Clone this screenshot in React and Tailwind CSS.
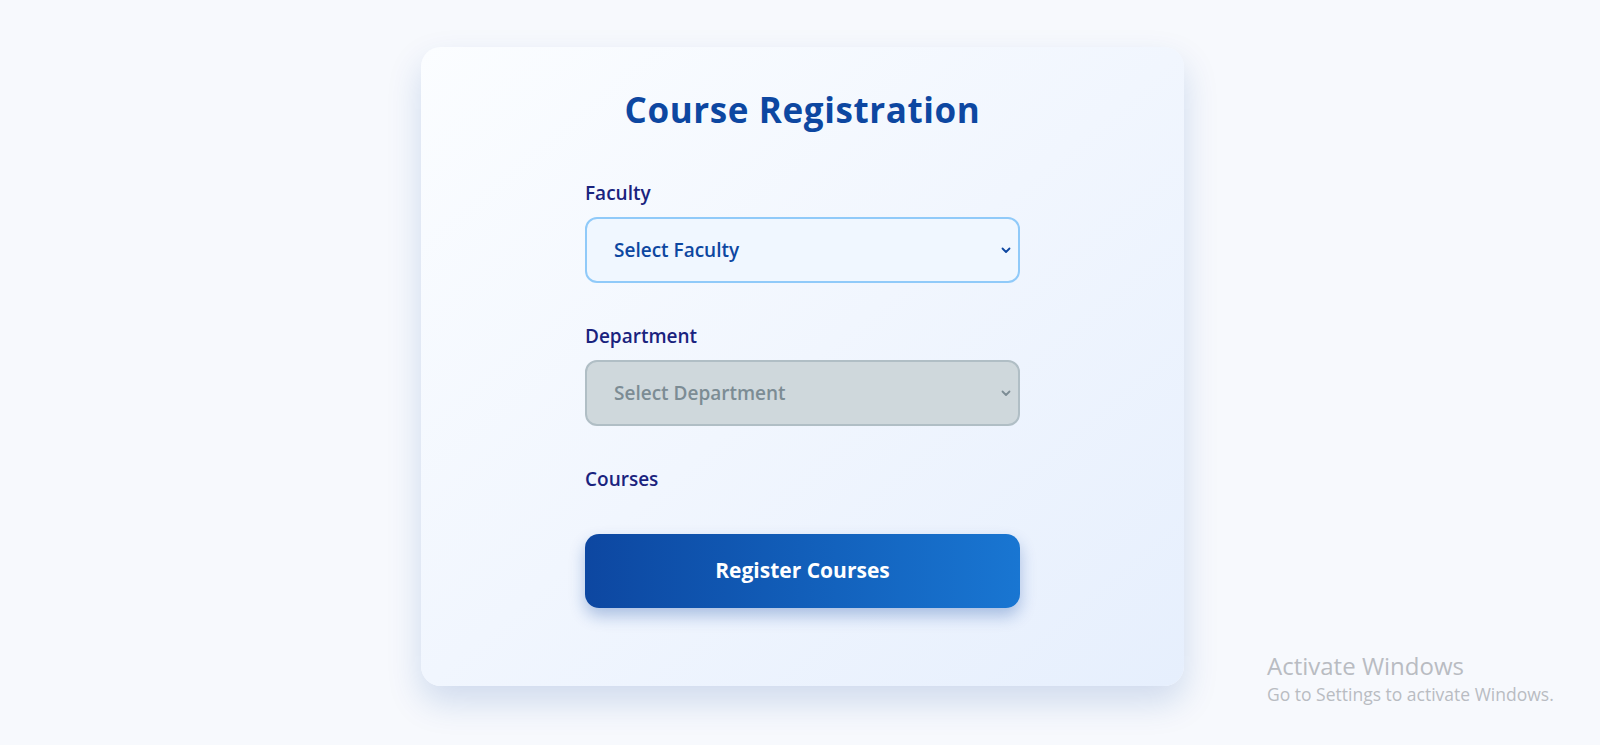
import { useState } from 'react';

const FONT = { fontFamily: '"Open Sans", "Noto Sans", "Liberation Sans", sans-serif' };

function Chevron({ color }) {
  return (
    <svg width="12" height="12" viewBox="0 0 12 12" fill="none">
      <path d="M2.5 4.5 6 8l3.5-3.5" stroke={color} strokeWidth="1.8" strokeLinecap="round" strokeLinejoin="round" />
    </svg>
  );
}

export default function App() {
  const [faculty, setFaculty] = useState('');

  return (
    <div className="relative min-h-screen bg-[#f7f9fd] flex justify-center pt-[47px]" style={FONT}>
      {/* Card */}
      <div className="ml-[5px] w-[763px] h-[639px] rounded-[20px] bg-gradient-to-br from-[#fbfdff] via-[#f1f6fe] to-[#e6effd] shadow-[0_16px_34px_rgba(13,71,161,0.17)] pt-[42px] flex flex-col items-center">
        <h1 className="text-[35px] leading-[42px] font-bold tracking-[0.6px] text-[#0d47a1]">Course Registration</h1>

        <form className="w-[435px] mt-[50px]" onSubmit={(e) => e.preventDefault()}>
          {/* Faculty */}
          <div className="mb-[41px]">
            <label className="block text-[19px] leading-[24px] font-semibold text-[#1a237e] mb-3">Faculty</label>
            <div className="h-[66px] rounded-[12px] border-2 border-[#90caf9] bg-[#f0f7ff] flex items-center justify-between pl-[27px] pr-[6px]">
              <span className="text-[19px] font-semibold text-[#0d47a1]">{faculty || 'Select Faculty'}</span>
              <Chevron color="#0d47a1" />
            </div>
          </div>

          {/* Department */}
          <div className="mb-[41px]">
            <label className="block text-[19px] leading-[24px] font-semibold text-[#1a237e] mb-3">Department</label>
            <div className="h-[66px] rounded-[12px] border-2 border-[#b0bec5] bg-[#cfd8dc] flex items-center justify-between pl-[27px] pr-[6px]">
              <span className="text-[19px] font-semibold text-[#7c8c94]">Select Department</span>
              <Chevron color="#7c8c94" />
            </div>
          </div>

          {/* Courses */}
          <div className="mb-[43px]">
            <label className="block text-[19px] leading-[24px] font-semibold text-[#1a237e]">Courses</label>
          </div>

          <button
            type="submit"
            onClick={() => setFaculty(faculty)}
            className="w-full h-[74px] rounded-[14px] bg-gradient-to-r from-[#0d47a1] to-[#1976d2] text-white text-[21px] font-bold shadow-[0_8px_16px_rgba(13,71,161,0.3)]"
          >
            Register Courses
          </button>
        </form>
      </div>

      {/* Windows watermark */}
      <div className="absolute left-[1267px] top-[651px] text-[#b9bcc2]">
        <div className="text-[24px] leading-[30px]">Activate Windows</div>
        <div className="text-[17.5px] leading-[24px] mt-[1px]">Go to Settings to activate Windows.</div>
      </div>
    </div>
  );
}
